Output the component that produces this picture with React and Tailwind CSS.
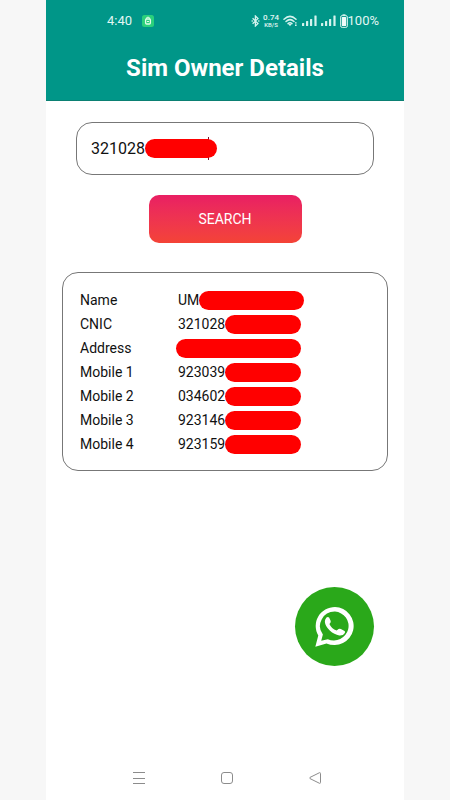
import React from 'react';

const details = [
  { label: 'Name', value: 'UM', bar: 'w-[105px]' },
  { label: 'CNIC', value: '321028', bar: 'w-[76px]' },
  { label: 'Address', value: '', bar: '-ml-[2px] w-[125px]' },
  { label: 'Mobile 1', value: '923039', bar: 'w-[76px]' },
  { label: 'Mobile 2', value: '034602', bar: 'w-[76px]' },
  { label: 'Mobile 3', value: '923146', bar: 'w-[76px]' },
  { label: 'Mobile 4', value: '923159', bar: 'w-[76px]' },
];

const SignalIcon = () => (
  <svg viewBox="0 0 15 12" className="h-3 w-[15px]" fill="#d5f3ee">
    <rect x="0" y="8" width="2.2" height="3" rx="0.5" />
    <rect x="4" y="6" width="2.2" height="5" rx="0.5" />
    <rect x="8" y="4" width="2.2" height="7" rx="0.5" />
    <rect x="12.4" y="0.5" width="2.2" height="10.5" rx="0.5" />
  </svg>
);

const StatusBar = () => (
  <div className="flex h-[41px] items-center justify-between pl-[61px] pr-[25px] text-[13px] text-[#e2f7f4]">
    <div className="flex items-center gap-[10px]">
      <span>4:40</span>
      <svg viewBox="0 0 12 12" className="h-3 w-3">
        <rect width="12" height="12" rx="2.5" fill="#2bd07b" />
        <rect x="3.6" y="4" width="4.8" height="5" rx="1" fill="none" stroke="#dffbe9" strokeWidth="1.3" />
        <path d="M4.4 4V3.2Q4.4 2.2 6 2.2Q7.6 2.2 7.6 3.2V4M5 6.5H7" fill="none" stroke="#dffbe9" strokeWidth="1" />
      </svg>
    </div>

    <div className="flex items-center gap-1">
      <svg viewBox="0 0 9 12" className="h-3 w-[9px]" fill="none" stroke="#d5f3ee" strokeWidth="1.3">
        <path d="M1.6 3.3L7 8.5L4.4 11V1L7 3.5L1.6 8.7" />
        <path d="M0.6 6H1.8M7.2 6H8.4" />
      </svg>
      <div className="flex w-[15px] flex-col items-center text-[8px] font-medium leading-[8px]">
        <span>0.74</span>
        <span className="text-[6px] leading-[6px]">KB/S</span>
      </div>
      <svg viewBox="0 0 15 12" className="h-3 w-[15px]">
        <g fill="none" stroke="#d5f3ee" strokeWidth="1.5" strokeLinecap="round">
          <path d="M1 4.2Q7 -1.4 13 4.2" />
          <path d="M3 6.5Q7 2.8 11 6.5" />
          <path d="M5 8.6Q7 6.9 9 8.6" />
        </g>
        <path d="M5.4 9H8.6L7 11.2Z" fill="#d5f3ee" />
        <path d="M12 7.2H13.6V8.6H12ZM12 9.6H13.6V11H12Z" fill="#d5f3ee" />
      </svg>
      <SignalIcon />
      <SignalIcon />
      <div className="flex items-center">
        <svg viewBox="0 0 8 14" className="h-[14px] w-2">
          <rect x="2.5" y="0.3" width="3" height="1.5" fill="#d5f3ee" />
          <rect x="0.6" y="1.6" width="6.8" height="11.8" rx="1.6" fill="none" stroke="#d5f3ee" strokeWidth="1" />
          <rect x="1.8" y="3" width="4.4" height="9" rx="0.6" fill="#eefcfa" />
        </svg>
        <span>100%</span>
      </div>
    </div>
  </div>
);

const WhatsappIcon = () => (
  <svg viewBox="90 80 120 122" className="h-10 w-10" fill="#fff">
    <path
      fillRule="evenodd"
      d="M150 80A59 58 0 1 1 124 191L90 201L99 167A59 58 0 0 1 150 80ZM150 94A45 44 0 0 0 113 164L108 183L128 178A45 44 0 1 0 150 94Z"
    />
    <path d="M124 112Q128 109 132 112L137 123Q138 127 133 132Q139 146 155 152L161 147Q164 145 168 147L179 153Q182 155 180 159Q175 168 163 167Q148 165 134 152Q120 138 119 125Q119 117 124 112Z" />
  </svg>
);

const NavBar = () => (
  <nav className="flex h-11 items-center justify-center gap-[76px] pl-[3px]">
    <button type="button" aria-label="Recent apps">
      <svg viewBox="0 0 12 12" className="h-3 w-3" stroke="#8c8c8c" strokeWidth="1">
        <path d="M0 0.500H12M0 6.500H12M0 11.500H12" />
      </svg>
    </button>
    <button type="button" aria-label="Home">
      <svg viewBox="0 0 12 12" className="h-3 w-3" fill="none" stroke="#8c8c8c" strokeWidth="1">
        <rect x="0.5" y="0.5" width="11" height="11" rx="2.5" />
      </svg>
    </button>
    <button type="button" aria-label="Back">
      <svg viewBox="0 0 12 12" className="h-3 w-3" fill="none" stroke="#8c8c8c" strokeWidth="1">
        <path d="M10.500 0.700L1 5.400Q0.200 6 1 6.600L10.500 11.300Q11.500 11.500 11.500 10.500V1.500Q11.500 0.500 10.500 0.700Z" />
      </svg>
    </button>
  </nav>
);

const App = () => {
  return (
    <div className="min-h-screen bg-[#f7f7f7] px-[46px] font-[Roboto,sans-serif]">
      <div className="flex min-h-screen flex-col bg-white">
        <header className="h-[101px] border-b border-[#0b8073] bg-[#009688] text-white">
          <StatusBar />
          <h1 className="mt-[11px] text-center text-2xl font-bold leading-8">Sim Owner Details</h1>
        </header>

        <main className="flex flex-1 flex-col px-4 pt-[21px]">
          <div className="mx-[14px] flex h-[53px] items-center rounded-2xl border border-[#777] px-[14px]">
            <input
              type="text"
              aria-label="Number"
              defaultValue="321028"
              className="w-[54px] bg-transparent text-base text-[#111] outline-none"
            />
            <div className="relative h-[19px] w-[72px]">
              <span className="absolute -top-[2px] left-[63px] h-[23px] w-px bg-[#7a1030]" />
              <span className="absolute inset-0 rounded-full bg-[#ff0000]" />
            </div>
          </div>

          <button
            type="button"
            className="mt-5 h-12 w-[153px] self-center rounded-[10px] bg-linear-to-b from-[#e91e63] to-[#f44336] text-sm text-white"
          >
            SEARCH
          </button>

          <div className="mt-[29px] rounded-2xl border border-[#777] px-[17px] pb-[14px] pt-[15px]">
            <table className="w-full text-left text-sm text-[#111]">
              <tbody>
                {details.map(({ label, value, bar }) => (
                  <tr key={label} className="h-6">
                    <th scope="row" className="w-[98px] p-0 font-normal">{label}</th>
                    <td className="p-0">
                      <div className="flex items-center">
                        <span>{value}</span>
                        <span className={`h-[19px] rounded-full bg-[#ff0000] ${bar}`} />
                      </div>
                    </td>
                  </tr>
                ))}
              </tbody>
            </table>
          </div>

          <a
            href="#whatsapp"
            aria-label="WhatsApp"
            className="mb-[90px] mr-[14px] mt-auto flex h-[79px] w-[79px] items-center justify-center self-end rounded-full bg-[#2aa81a]"
          >
            <WhatsappIcon />
          </a>
        </main>

        <NavBar />
      </div>
    </div>
  );
};

export default App;
